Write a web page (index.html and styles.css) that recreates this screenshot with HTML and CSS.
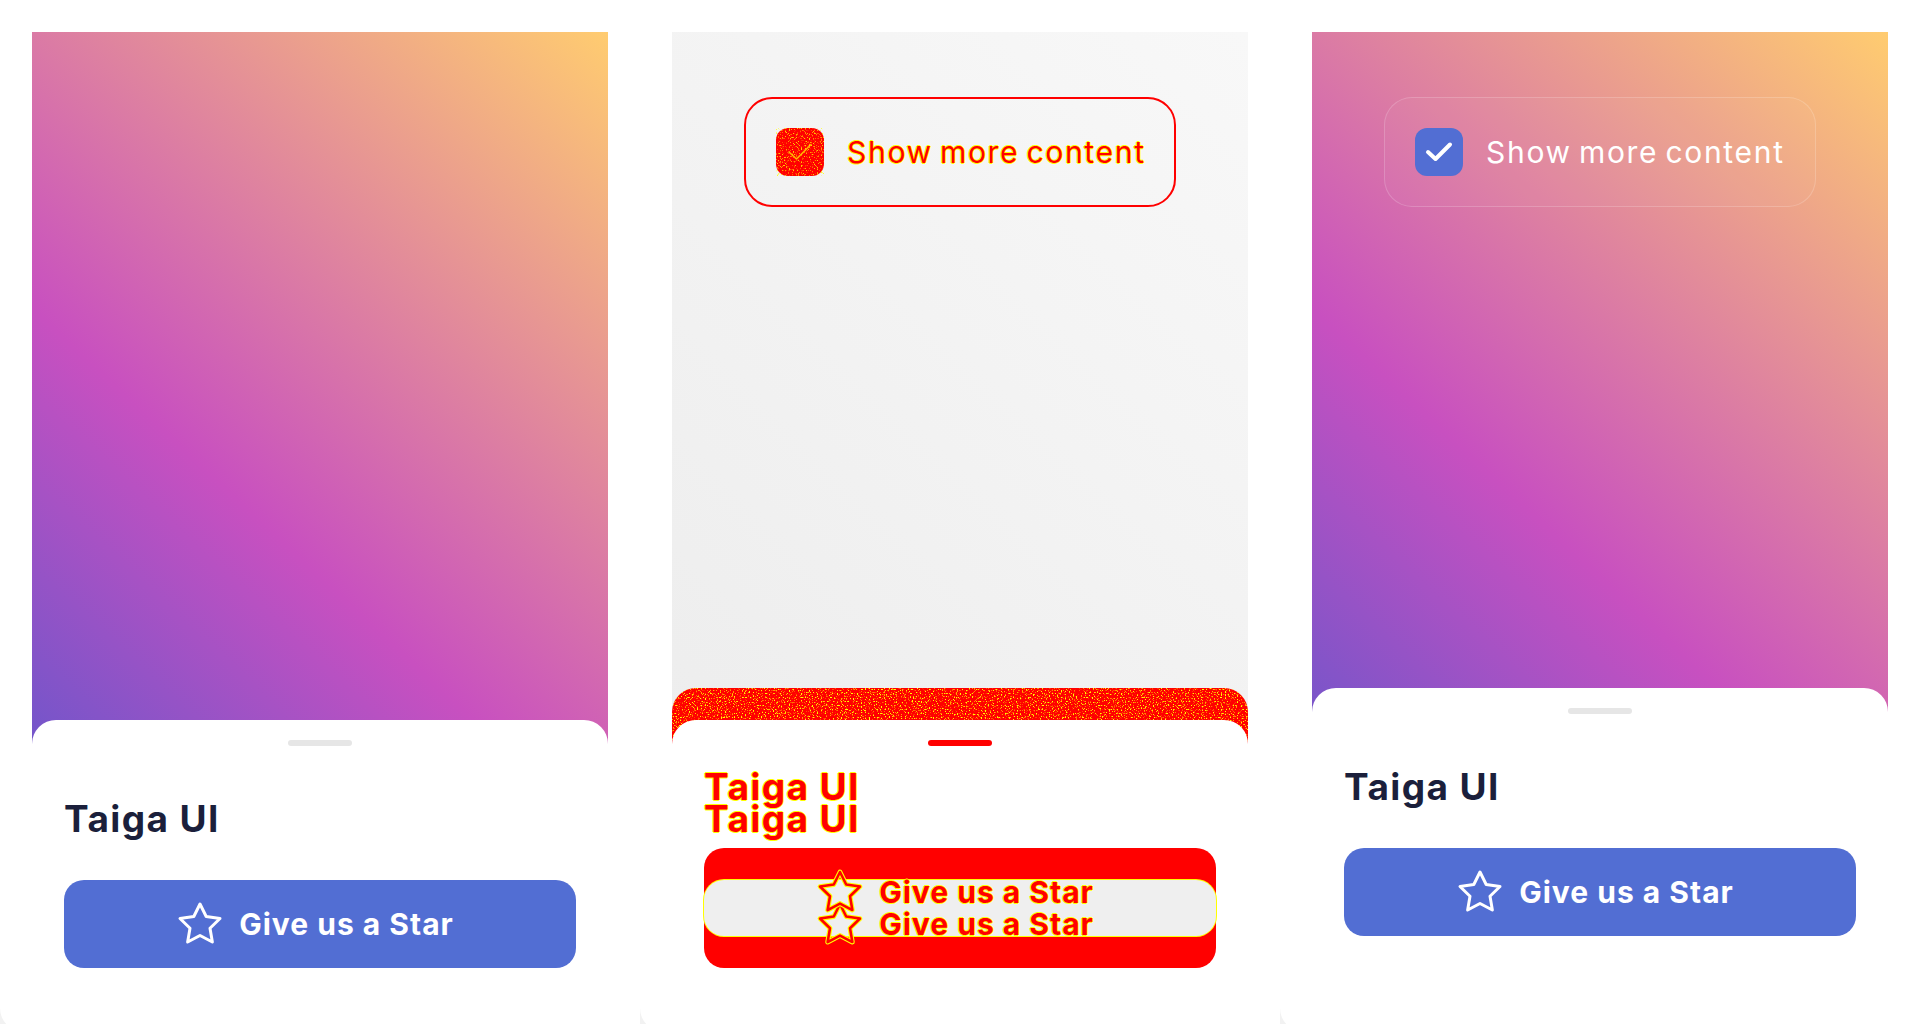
FILE: index.html
```html
<!DOCTYPE html>
<html lang="en">
<head>
<meta charset="utf-8">
<title>Taiga UI sheet demo</title>
<link rel="stylesheet" href="styles.css">
</head>
<body>
<svg class="defs" aria-hidden="true">
  <defs>
    <filter id="speck" x="0" y="0" width="100%" height="100%" color-interpolation-filters="sRGB">
      <feTurbulence type="fractalNoise" baseFrequency="0.75" numOctaves="1" seed="7"/>
      <feColorMatrix type="matrix" values="0 0 0 0 1  0 0 0 0 1  0 0 0 0 0  8 0 0 0 -4.5"/>
    </filter>
    <symbol id="star" viewBox="0 0 24 24">
      <polygon points="12 2 15.09 8.26 22 9.27 17 14.14 18.18 21.02 12 17.77 5.82 21.02 7 14.14 2 9.27 8.91 8.26 12 2"/>
    </symbol>
  </defs>
</svg>

<div class="page">
  <!-- Card 1: collapsed sheet over gradient -->
  <section class="card">
    <div class="demo demo--gradient">
      <div class="sheet">
        <div class="handle"></div>
        <div class="title-wrap"><h3 class="title">Taiga UI</h3></div>
        <button class="star-btn" type="button">
          <span class="btn-content">
            <svg class="star" width="48" height="48"><use href="#star"/></svg>
            <span>Give us a Star</span>
          </span>
        </button>
      </div>
    </div>
  </section>

  <!-- Card 2: visual diff -->
  <section class="card">
    <div class="demo demo--diff">
      <label class="toggle toggle--diff">
        <span class="check check--diff">
          <svg width="48" height="48" viewBox="0 0 48 48">
            <rect width="48" height="48" rx="12" fill="#ff0000"/>
            <rect width="48" height="48" rx="12" filter="url(#speck)" opacity="0.8"/>
            <polyline points="13,24 20.5,31 35,16.5" fill="none" stroke="#ffe100" stroke-width="1.6" stroke-linecap="round" stroke-linejoin="round" opacity="0.8"/>
          </svg>
        </span>
        <span class="toggle-text diff-text">Show more content</span>
      </label>
      <div class="sheet sheet--diff">
        <div class="diff-band">
          <svg class="noise" preserveAspectRatio="none"><rect width="100%" height="100%" filter="url(#speck)"/></svg>
        </div>
        <div class="handle handle--diff"></div>
        <div class="title-wrap">
          <h3 class="title diff-text">Taiga UI</h3>
          <h3 class="title diff-text title--ghost" aria-hidden="true">Taiga UI</h3>
        </div>
        <div class="star-btn star-btn--diff">
          <span class="diff-ghost-bg"></span>
          <span class="diff-overlap"></span>
          <span class="btn-content btn-content--diff">
            <svg class="star star--diff" width="48" height="48" viewBox="0 0 24 24">
              <use href="#star" class="star-edge"/>
              <use href="#star" class="star-core"/>
            </svg>
            <span class="diff-text">Give us a Star</span>
          </span>
          <span class="btn-ghost" aria-hidden="true">
            <span class="btn-content btn-content--diff">
              <svg class="star star--diff" width="48" height="48" viewBox="0 0 24 24">
                <use href="#star" class="star-edge"/>
                <use href="#star" class="star-core"/>
              </svg>
              <span class="diff-text">Give us a Star</span>
            </span>
          </span>
        </div>
      </div>
    </div>
  </section>

  <!-- Card 3: expanded sheet with toggle -->
  <section class="card">
    <div class="demo demo--gradient">
      <label class="toggle">
        <span class="check">
          <svg width="48" height="48" viewBox="0 0 48 48">
            <polyline points="13,24 20.5,31 35,16.5" fill="none" stroke="#ffffff" stroke-width="4" stroke-linecap="round" stroke-linejoin="round"/>
          </svg>
        </span>
        <span class="toggle-text">Show more content</span>
      </label>
      <div class="sheet sheet--expanded">
        <div class="handle"></div>
        <div class="title-wrap"><h3 class="title">Taiga UI</h3></div>
        <button class="star-btn" type="button">
          <span class="btn-content">
            <svg class="star" width="48" height="48"><use href="#star"/></svg>
            <span>Give us a Star</span>
          </span>
        </button>
      </div>
    </div>
  </section>
</div>
</body>
</html>
```

FILE: styles.css
```css
html, body {
  margin: 0;
  padding: 0;
}

body {
  background: #f2f2f2;
  font-family: Inter, "Noto Sans", sans-serif;
  overflow: hidden;
}

.defs {
  position: absolute;
  width: 0;
  height: 0;
  overflow: hidden;
}

.page {
  display: flex;
}

.card {
  flex: 0 0 640px;
  width: 640px;
  height: 1032px;
  box-sizing: border-box;
  padding: 32px;
  background: #ffffff;
  border-radius: 0 0 0 24px;
}

.demo {
  height: 968px;
  display: flex;
  flex-direction: column;
  align-items: center;
  overflow: hidden;
  position: relative;
  isolation: isolate;
}

.demo--gradient {
  background: linear-gradient(43deg, #4158d0 0%, #c850c0 46%, #ffcc70 100%);
}

.demo--diff {
  background: linear-gradient(43deg, #ebebeb 0%, #f1f1f1 46%, #f8f8f8 100%);
}

/* toggle pill */
.toggle {
  margin-top: 65px;
  width: 432px;
  height: 110px;
  box-sizing: border-box;
  display: flex;
  align-items: center;
  gap: 23px;
  padding-left: 30px;
  border: 1px solid rgba(255, 255, 255, 0.18);
  border-radius: 28px;
  background: rgba(255, 255, 255, 0.03);
}

.check {
  flex: 0 0 48px;
  width: 48px;
  height: 48px;
  border-radius: 12px;
  background: #526ed3;
  display: flex;
}

.toggle-text {
  font-size: 30px;
  font-weight: 400;
  color: #ffffff;
  letter-spacing: 1.7px;
  word-spacing: -3px;
  white-space: nowrap;
}

/* bottom sheet */
.sheet {
  align-self: stretch;
  margin-top: auto;
  background: #ffffff;
  border-radius: 24px 24px 0 0;
  padding: 20px 32px 32px;
  display: flex;
  flex-direction: column;
  position: relative;
}

.sheet--expanded {
  padding-bottom: 64px;
}

.handle {
  align-self: center;
  width: 64px;
  height: 6px;
  border-radius: 3px;
  background: #e6e6e6;
}

.title-wrap {
  position: relative;
  margin: 51px 0 39px;
}

.title {
  margin: 0;
  font-size: 37px;
  line-height: 44px;
  font-weight: 700;
  letter-spacing: 1.4px;
  color: #1b1f3b;
}

.star-btn {
  height: 88px;
  border: 0;
  border-radius: 20px;
  background: #526ed3;
  color: #ffffff;
  display: flex;
  align-items: center;
  justify-content: center;
  padding: 0;
  font-family: Inter, "Noto Sans", sans-serif;
  font-size: 30px;
  font-weight: 700;
  letter-spacing: 1px;
  position: relative;
}

.btn-content {
  display: flex;
  align-items: center;
  gap: 15px;
  padding-right: 10px;
}

.star {
  fill: none;
  stroke: currentColor;
  stroke-width: 1.5;
  stroke-linejoin: round;
  stroke-linecap: round;
}

/* ---------- diff rendering ---------- */
.diff-text {
  color: #ff0000;
  text-shadow: 1px 0 #ffff00, -1px 0 #ffff00, 0 1px #ffff00, 0 -1px #ffff00;
}

.toggle--diff {
  border: 2px solid #ff0000;
  background: transparent;
}

.check--diff {
  background: transparent;
}

.diff-band {
  position: absolute;
  left: 0;
  right: 0;
  top: -32px;
  height: 60px;
  background: #ff0000;
  border-radius: 24px 24px 0 0;
  overflow: hidden;
  z-index: -1;
}

.noise {
  display: block;
  width: 100%;
  height: 100%;
}

.handle--diff {
  background: #ff0000;
}

.title--ghost {
  position: absolute;
  left: 0;
  top: -32px;
}

.star-btn--diff {
  background: #ff0000;
}

.diff-ghost-bg {
  position: absolute;
  left: 0;
  right: 0;
  top: -32px;
  height: 88px;
  border-radius: 20px;
  background: #ff0000;
}

.diff-overlap {
  position: absolute;
  left: 0;
  right: 0;
  top: 0;
  height: 56px;
  border-radius: 20px;
  background: #efefef;
  box-shadow: 0 0 0 1px #ffff00;
}

.btn-content--diff {
  position: relative;
  z-index: 1;
}

.btn-ghost {
  position: absolute;
  left: 0;
  right: 0;
  top: -32px;
  height: 88px;
  display: flex;
  align-items: center;
  justify-content: center;
  z-index: 1;
}

.star--diff .star-edge {
  stroke: #ffff00;
  stroke-width: 2.4;
}

.star--diff .star-core {
  stroke: #ff0000;
  stroke-width: 1.3;
}
```
